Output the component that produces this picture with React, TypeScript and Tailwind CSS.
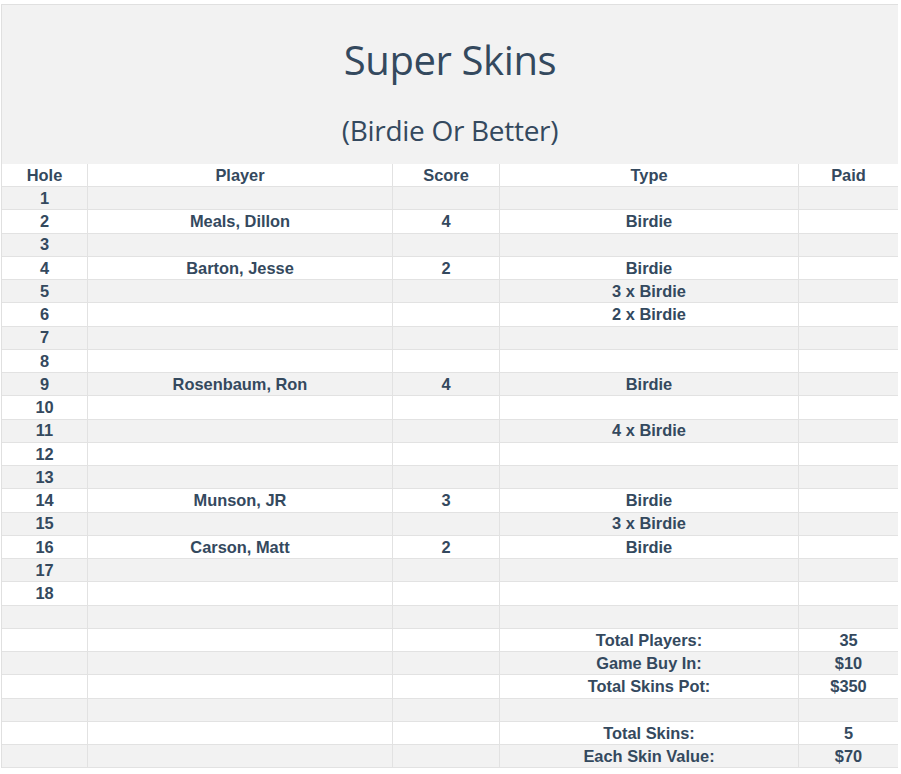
import React from "react"

type Row = { hole?: string; player?: string; score?: string; type?: string; paid?: string }

const holes: Row[] = [
  { hole: "1" },
  { hole: "2", player: "Meals, Dillon", score: "4", type: "Birdie" },
  { hole: "3" },
  { hole: "4", player: "Barton, Jesse", score: "2", type: "Birdie" },
  { hole: "5", type: "3 x Birdie" },
  { hole: "6", type: "2 x Birdie" },
  { hole: "7" },
  { hole: "8" },
  { hole: "9", player: "Rosenbaum, Ron", score: "4", type: "Birdie" },
  { hole: "10" },
  { hole: "11", type: "4 x Birdie" },
  { hole: "12" },
  { hole: "13" },
  { hole: "14", player: "Munson, JR", score: "3", type: "Birdie" },
  { hole: "15", type: "3 x Birdie" },
  { hole: "16", player: "Carson, Matt", score: "2", type: "Birdie" },
  { hole: "17" },
  { hole: "18" },
]

const totals: Row[] = [
  {},
  { type: "Total Players:", paid: "35" },
  { type: "Game Buy In:", paid: "$10" },
  { type: "Total Skins Pot:", paid: "$350" },
  {},
  { type: "Total Skins:", paid: "5" },
  { type: "Each Skin Value:", paid: "$70" },
]

function Cell({ children, last }: { children?: React.ReactNode; last?: boolean }) {
  return (
    <div
      className={
        "flex items-center justify-center h-full leading-none " + (last ? "" : "border-r border-[#e2e2e2]")
      }
    >
      {children}
    </div>
  )
}

function TableRow({ row, gray }: { row: Row; gray: boolean }) {
  return (
    <div
      className={
        "grid grid-cols-[86px_305px_107px_299px_1fr] h-[23.25px] border-b border-[#e2e2e2] " +
        (gray ? "bg-[#f2f2f2]" : "bg-white")
      }
    >
      <Cell>{row.hole}</Cell>
      <Cell>{row.player}</Cell>
      <Cell>{row.score}</Cell>
      <Cell>{row.type}</Cell>
      <Cell last>{row.paid}</Cell>
    </div>
  )
}

export default function App() {
  const rows = [...holes, ...totals]

  return (
    <div className="min-h-screen bg-white pt-[4px] pl-[1px]">
      <div className="w-[897px] border-l border-t border-[#e0e0e0] text-[#34495e]">
        {/* Title */}
        <div className="bg-[#f2f2f2] h-[159px] flex flex-col items-center font-['Open_Sans',sans-serif]">
          <h1 className="mt-[31px] text-[40px] leading-[48px] tracking-[-0.4px]">Super Skins</h1>
          <h2 className="mt-[29px] text-[28px] leading-[34px] tracking-[-0.3px]">(Birdie Or Better)</h2>
        </div>

        {/* Table */}
        <div className="font-['Liberation_Sans',Arial,sans-serif] font-bold text-[16.4px]">
          <div className="grid grid-cols-[86px_305px_107px_299px_1fr] h-[23px] border-b border-[#e2e2e2] bg-white">
            <Cell>Hole</Cell>
            <Cell>Player</Cell>
            <Cell>Score</Cell>
            <Cell>Type</Cell>
            <Cell last>Paid</Cell>
          </div>
          {rows.map((row, i) => (
            <TableRow key={i} row={row} gray={i % 2 === 0} />
          ))}
        </div>
      </div>
    </div>
  )
}
